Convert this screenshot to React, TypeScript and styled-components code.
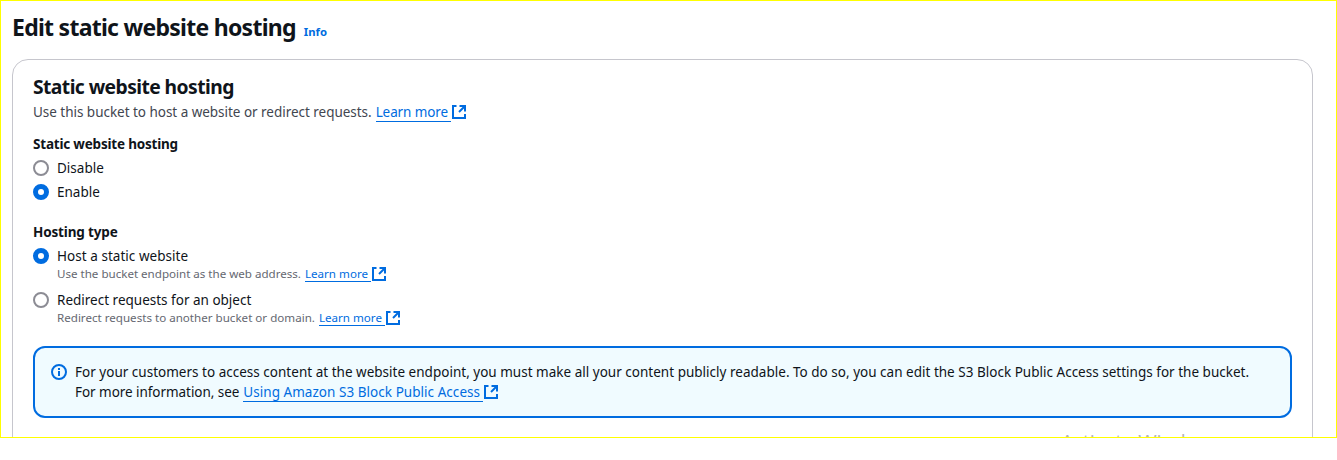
import React from "react";
import styled, { createGlobalStyle } from "styled-components";

const Global = createGlobalStyle`
  * { box-sizing: border-box; }
  body { margin: 0; background: #fff; font-family: "Noto Sans", "Open Sans", sans-serif; color: #0f141a; }
`;

const Frame = styled.main`
  position: relative;
  height: 438px;
  border: 1px solid #ffff00;
  padding: 11px 23px 0 11px;
  overflow: hidden;
`;

const PageHeader = styled.header`
  display: flex;
  align-items: baseline;
  gap: 8px;
  height: 47px;
`;

const Text = styled.span<{ $ls?: number }>`
  letter-spacing: ${(p) => p.$ls ?? 0}px;
  white-space: pre;
`;

const PageTitle = styled.h1`
  margin: 0;
  font-size: 23px;
  line-height: 30px;
  font-weight: 700;
`;

const Info = styled.a`
  color: #006ce0;
  font-size: 11.3px;
  line-height: 16px;
  font-weight: 700;
`;

const Card = styled.section`
  height: 420px;
  border: 1px solid #c6c6cd;
  border-radius: 16px;
  padding: 15px 20px 0;
`;

const CardTitle = styled.h2`
  margin: 0;
  font-size: 19.3px;
  line-height: 24px;
  font-weight: 700;
`;

const Line = styled.div<{ $size?: number; $lh?: number; $color?: string }>`
  display: flex;
  align-items: center;
  white-space: pre;
  font-size: ${(p) => p.$size ?? 13.5}px;
  line-height: ${(p) => p.$lh ?? 20}px;
  height: ${(p) => p.$lh ?? 20}px;
  color: ${(p) => p.$color ?? "#0f141a"};
`;

const Link = styled.a<{ $ls?: number; $h: number }>`
  display: block;
  height: ${(p) => p.$h}px;
  line-height: ${(p) => p.$h - 1}px;
  margin-left: 4px;
  padding-right: 3px;
  color: #006ce0;
  letter-spacing: ${(p) => p.$ls ?? 0}px;
  border-bottom: 1px solid #006ce0;
`;

const Icon = styled.svg`
  display: block;
  flex: none;
  fill: none;
  stroke: #006ce0;
  stroke-width: 2;
`;

const Field = styled.div<{ $top: number }>`
  margin-top: ${(p) => p.$top}px;
`;

const Label = styled.div`
  font-size: 13.5px;
  line-height: 20px;
  font-weight: 700;
  margin-bottom: 4px;
`;

const Option = styled.div<{ $gap?: number }>`
  display: grid;
  grid-template-columns: 16px 1fr;
  column-gap: 8px;
  margin-bottom: ${(p) => p.$gap ?? 4}px;
`;

const Radio = styled.span<{ $on?: boolean }>`
  width: 16px;
  height: 16px;
  margin-top: 2px;
  border-radius: 50%;
  background: #fff;
  border: ${(p) => (p.$on ? "5px solid #006ce0" : "2px solid #8c8c94")};
`;

const Notice = styled.div`
  display: flex;
  gap: 8px;
  height: 72px;
  margin-top: 20px;
  padding: 14px 16px;
  border: 2px solid #006ce0;
  border-radius: 12px;
  background: #f0fbff;
`;

const NoticeIcon = styled(Icon)`
  margin-top: 2px;
`;

const Watermark = styled.div`
  position: absolute;
  left: 1060px;
  top: 427px;
  font-family: "Open Sans", sans-serif;
  font-size: 20px;
  letter-spacing: -0.2px;
  line-height: 27px;
  color: #b4b4b4;
  white-space: nowrap;
`;

const External = () => (
  <Icon width="16" height="16" viewBox="0 0 16 16">
    <path d="M9.5 2H14v4.5" strokeLinecap="square" />
    <path d="M8 8l6-6" />
    <path d="M14 10v4H2V2h3.5" />
  </Icon>
);

const InfoIcon = () => (
  <NoticeIcon width="16" height="16" viewBox="0 0 16 16">
    <circle cx="8" cy="8" r="7" />
    <path d="M8 12V7M8 6V4" />
  </NoticeIcon>
);

const Hint = ({ text, ls }: { text: string; ls?: number }) => (
  <Line $size={11.6} $lh={16} $color="#656871">
    <Text $ls={ls}>{text}</Text>
    <Link $h={16}>Learn more</Link>
    <External />
  </Line>
);

export default function App() {
  return (
    <>
      <Global />
      <Frame>
        <PageHeader>
          <PageTitle><Text $ls={-0.73}>Edit static website hosting</Text></PageTitle>
          <Info><Text>Info</Text></Info>
        </PageHeader>
        <Card>
          <CardTitle><Text $ls={-0.57}>Static website hosting</Text></CardTitle>
          <Line $color="#424650" $lh={26}>
            <Text $ls={-0.03}>Use this bucket to host a website or redirect requests.</Text>
            <Link $h={19} $ls={-0.1}>Learn more</Link>
            <External />
          </Line>
          <Field $top={9}>
            <Label><Text $ls={-0.2}>Static website hosting</Text></Label>
            <Option><Radio /><Line><Text>Disable</Text></Line></Option>
            <Option><Radio $on /><Line><Text>Enable</Text></Line></Option>
          </Field>
          <Field $top={20}>
            <Label><Text $ls={-0.15}>Hosting type</Text></Label>
            <Option $gap={8}>
              <Radio $on />
              <div>
                <Line><Text $ls={0.04}>Host a static website</Text></Line>
                <Hint text="Use the bucket endpoint as the web address." ls={-0.012} />
              </div>
            </Option>
            <Option>
              <Radio />
              <div>
                <Line><Text>Redirect requests for an object</Text></Line>
                <Hint text="Redirect requests to another bucket or domain." />
              </div>
            </Option>
          </Field>
          <Notice>
            <InfoIcon />
            <div>
              <Line><Text $ls={0.012}>For your customers to access content at the website endpoint, you must make all your content publicly readable. To do so, you can edit the S3 Block Public Access settings for the bucket.</Text></Line>
              <Line>
                <Text $ls={-0.05}>For more information, see</Text>
                <Link $h={19} $ls={0.04}>Using Amazon S3 Block Public Access</Link>
                <External />
              </Line>
            </div>
          </Notice>
        </Card>
        <Watermark>Activate Windows</Watermark>
      </Frame>
    </>
  );
}
